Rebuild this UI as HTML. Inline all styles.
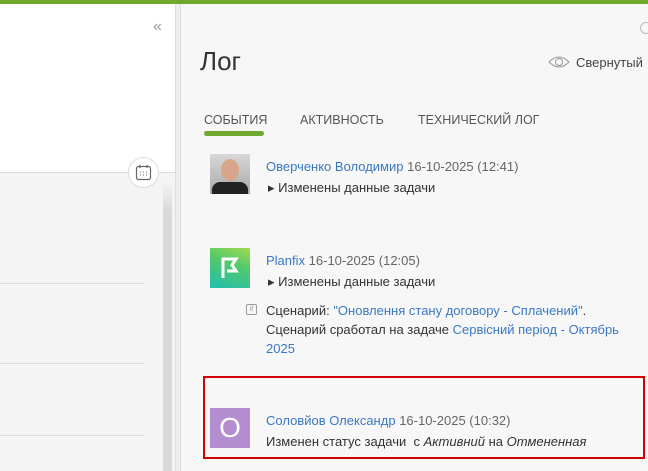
<!DOCTYPE html><html><head><meta charset="utf-8"><style>
*{margin:0;padding:0;box-sizing:border-box}
body{width:648px;height:471px;overflow:hidden;position:relative;background:#f7f7f7;font-family:"Liberation Sans","DejaVu Sans",sans-serif;font-size:13px;color:#333}
.a{position:absolute}
.lnk{color:#3a78c4}
.g{color:#666}
</style></head><body>
<div class="a" style="left:0;top:0;width:648px;height:4px;background:#6fa82e"></div>
<div class="a" style="left:0;top:4px;width:175px;height:168px;background:#fff"></div>
<div class="a" style="left:0;top:172px;width:175px;height:299px;background:#f4f4f4;border-top:1px solid #ddd"></div>
<div class="a" style="left:0;top:283px;width:144px;height:1px;background:#ddd"></div>
<div class="a" style="left:0;top:363px;width:144px;height:1px;background:#ddd"></div>
<div class="a" style="left:0;top:435px;width:144px;height:1px;background:#ddd"></div>
<div class="a" style="left:163px;top:182px;width:9px;height:289px;background:linear-gradient(#f4f4f4,#d9d9d9 30px)"></div>
<div class="a" style="left:175px;top:4px;width:6px;height:467px;background:#eee;border-left:1px solid #ddd;border-right:1px solid #ddd"></div>
<div class="a g" style="left:153px;top:18px;font-size:16px;color:#999">«</div>
<div class="a" style="left:128px;top:157px;width:31px;height:31px;border-radius:50%;background:#fff;border:1px solid #ddd"></div>
<svg class="a" style="left:135px;top:164px" width="17" height="17" viewBox="0 0 17 17"><rect x="1.5" y="2.5" width="14" height="13" rx="2" fill="none" stroke="#666" stroke-width="1.2"/><path d="M5 1v3M12 1v3" stroke="#666" stroke-width="1.2"/><path d="M5 8h1M8 8h1M11 8h1M5 11h1M8 11h1M11 11h1" stroke="#666"/></svg>
<div class="a" style="left:200px;top:46px;font-size:26px;color:#333">Лог</div>
<svg class="a" style="left:548px;top:55px" width="22" height="14" viewBox="0 0 22 14"><path d="M1 7Q11-3 21 7Q11 17 1 7Z" fill="none" stroke="#999"/><circle cx="11" cy="7" r="3.5" fill="none" stroke="#999"/></svg>
<div class="a" style="left:576px;top:55px;font-size:13px;color:#444">Свернутый</div>
<div class="a" style="left:640px;top:22px;width:12px;height:12px;border-radius:50%;border:1px solid #bbb"></div>
<div class="a" style="left:204px;top:113px;font-size:12.5px;color:#555">СОБЫТИЯ</div>
<div class="a" style="left:300px;top:113px;font-size:12.5px;color:#555">АКТИВНОСТЬ</div>
<div class="a" style="left:418px;top:113px;font-size:12.5px;color:#555">ТЕХНИЧЕСКИЙ ЛОГ</div>
<div class="a" style="left:204px;top:131px;width:60px;height:5px;border-radius:3px;background:#6fa82e"></div>
<div class="a" style="left:210px;top:154px;width:40px;height:40px;background:linear-gradient(#d8d8d8,#a8a8a8)"><div class="a" style="left:11px;top:5px;width:18px;height:22px;border-radius:50%;background:#d9a58a"></div><div class="a" style="left:2px;top:28px;width:36px;height:12px;border-radius:8px 8px 0 0;background:#222"></div></div>
<div class="a" style="left:266px;top:159px"><span class="lnk">Оверченко Володимир</span> <span class="g">16-10-2025 (12:41)</span></div>
<div class="a" style="left:268px;top:180px">▸ Изменены данные задачи</div>
<div class="a" style="left:210px;top:248px;width:40px;height:40px;background:linear-gradient(20deg,#1fbfb0,#55c86a 60%,#9fdc50)"><svg width="40" height="40"><path d="M13 30V11h13l-4 6 4 6h-9" fill="none" stroke="#fff" stroke-width="3"/></svg></div>
<div class="a" style="left:266px;top:253px"><span class="lnk">Planfix</span> <span class="g">16-10-2025 (12:05)</span></div>
<div class="a" style="left:268px;top:274px">▸ Изменены данные задачи</div>
<div class="a" style="left:246px;top:304px;width:11px;height:11px;border:1px solid #999;border-radius:2px;font-size:7px;color:#999;line-height:9px;text-align:center">if</div>
<div class="a" style="left:266px;top:301px;width:378px;line-height:19px">Сценарий: <span class="lnk">"Оновлення стану договору - Сплачений"</span>.<br>Сценарий сработал на задаче <span class="lnk">Сервісний період - Октябрь<br>2025</span></div>
<div class="a" style="left:203px;top:376px;width:442px;height:83px;border:2px solid #d40000"></div>
<div class="a" style="left:210px;top:408px;width:40px;height:40px;background:#b48cd0;color:#fff;font-size:28px;text-align:center;line-height:40px">O</div>
<div class="a" style="left:266px;top:413px"><span class="lnk">Соловйов Олександр</span> <span class="g">16-10-2025 (10:32)</span></div>
<div class="a" style="left:266px;top:434px">Изменен статус задачи&nbsp; с <i>Активний</i> на <i>Отмененная</i></div>
</body></html>
